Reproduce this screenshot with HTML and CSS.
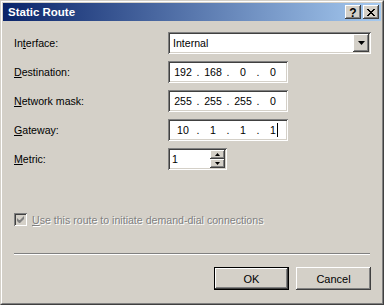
FILE: index.html
```html
<!DOCTYPE html>
<html lang="en">
<head>
  <meta charset="UTF-8" />
  <title>Static Route</title>
  <link rel="stylesheet" href="styles.css">
</head>
<body>
  <div class="window">
    <div class="frame">
      <div class="titlebar">
        <span class="title">Static Route</span>
        <div class="title-btns">
          <div class="tbtn help">?</div>
          <div class="tbtn close">
            <svg width="8" height="7" viewBox="0 0 8 7"><path d="M0 0h2v1h1v1h2v-1h1v-1h2v1h-1v1h-1v1h-1v1h1v1h1v1h1v1h-2v-1h-1v-1h-2v1h-1v1h-2v-1h1v-1h1v-1h1v-1h-1v-1h-1v-1h-1z" fill="#000"/></svg>
          </div>
        </div>
      </div>

      <div class="client">
        <div class="form">
          <label class="lbl">In<u>t</u>erface:</label>
          <div class="combo sunken">
            <span class="combo-text">Internal</span>
            <div class="drop-btn raised">
              <svg width="7" height="4" viewBox="0 0 7 4"><path d="M0 0h7l-3.5 4z" fill="#000"/></svg>
            </div>
          </div>

          <label class="lbl"><u>D</u>estination:</label>
          <div class="ip sunken">
            <span class="seg">192</span><span class="dot">.</span><span class="seg">168</span><span class="dot">.</span><span class="seg">0</span><span class="dot">.</span><span class="seg">0</span>
          </div>

          <label class="lbl"><u>N</u>etwork mask:</label>
          <div class="ip sunken">
            <span class="seg">255</span><span class="dot">.</span><span class="seg">255</span><span class="dot">.</span><span class="seg">255</span><span class="dot">.</span><span class="seg">0</span>
          </div>

          <label class="lbl"><u>G</u>ateway:</label>
          <div class="ip sunken">
            <span class="seg">10</span><span class="dot">.</span><span class="seg">1</span><span class="dot">.</span><span class="seg">1</span><span class="dot">.</span><span class="seg">1<span class="caret"></span></span>
          </div>

          <label class="lbl"><u>M</u>etric:</label>
          <div class="spin sunken">
            <span class="spin-text">1</span>
            <div class="spin-btns">
              <div class="spin-btn raised">
                <svg width="5" height="3" viewBox="0 0 5 3"><path d="M2.5 0l2.5 3h-5z" fill="#000"/></svg>
              </div>
              <div class="spin-btn raised">
                <svg width="5" height="3" viewBox="0 0 5 3"><path d="M0 0h5l-2.5 3z" fill="#000"/></svg>
              </div>
            </div>
          </div>
        </div>

        <div class="check-row">
          <div class="checkbox">
            <svg width="7" height="7" viewBox="0 0 7 7"><path d="M0 2v3l2 2h1l4-4v-3l-4 4h-1z" fill="#808080"/></svg>
          </div>
          <span class="check-text"><u>U</u>se this route to initiate demand-dial connections</span>
        </div>

        <div class="separator"></div>

        <div class="buttons">
          <button class="btn default">OK</button>
          <button class="btn">Cancel</button>
        </div>
      </div>
    </div>
  </div>
</body>
</html>
```

FILE: styles.css
```css
body {
  margin: 0;
  font-family: "Liberation Sans", Arial, sans-serif;
  font-size: 10.6px;
  color: #000;
}

.window {
  width: 384px;
  height: 305px;
  box-sizing: border-box;
  border: 1px solid;
  border-color: #d4d0c8 #404040 #404040 #d4d0c8;
  background: #d4d0c8;
}
.frame {
  height: 100%;
  box-sizing: border-box;
  border: 1px solid;
  border-color: #ffffff #808080 #808080 #ffffff;
  padding: 1px;
}

.titlebar {
  height: 18px;
  display: flex;
  align-items: center;
  justify-content: space-between;
  background: linear-gradient(to right, #0a246a, #a6caf0);
  padding: 0 2px 0 5px;
}
.title {
  color: #fff;
  font-weight: bold;
  font-size: 11.5px;
}
.title-btns {
  display: flex;
  gap: 2px;
}

.raised {
  background: #d4d0c8;
  box-sizing: border-box;
  box-shadow: inset -1px -1px #404040, inset 1px 1px #ffffff, inset -2px -2px #808080, inset 2px 2px #d4d0c8;
}
.sunken {
  background: #fff;
  box-sizing: border-box;
  box-shadow: inset 1px 1px #808080, inset -1px -1px #ffffff, inset 2px 2px #404040, inset -2px -2px #d4d0c8;
}

.tbtn {
  width: 16px;
  height: 14px;
  display: flex;
  align-items: center;
  justify-content: center;
  background: #d4d0c8;
  box-sizing: border-box;
  box-shadow: inset -1px -1px #404040, inset 1px 1px #ffffff, inset -2px -2px #808080, inset 2px 2px #d4d0c8;
}
.help {
  font-weight: bold;
  font-size: 12px;
  line-height: 14px;
  padding-top: 1px;
}
.close {
  padding-top: 1px;
}

.client {
  padding: 11px 10px 0 11px;
}

.form {
  display: grid;
  grid-template-columns: 154px auto;
  grid-auto-rows: 22px;
  row-gap: 7px;
  align-items: center;
}
.lbl {
  padding-bottom: 1px;
}

.combo {
  height: 22px;
  width: 203px;
  display: flex;
  align-items: center;
  justify-content: space-between;
  padding: 2px;
}
.combo-text {
  padding-left: 3px;
}
.drop-btn {
  width: 16px;
  height: 18px;
  display: flex;
  align-items: center;
  justify-content: center;
}

.ip {
  width: 120px;
  height: 22px;
  display: flex;
  align-items: center;
  padding: 0 2px;
}
.seg {
  width: 26px;
  text-align: center;
  position: relative;
}
.dot {
  width: 4px;
  text-align: center;
}
.caret {
  position: absolute;
  top: -1px;
  margin-left: 1px;
  width: 1px;
  height: 14px;
  background: #000;
}

.spin {
  width: 59px;
  height: 22px;
  display: flex;
  align-items: center;
  justify-content: space-between;
  padding: 2px;
}
.spin-text {
  padding-left: 2px;
}
.spin-btns {
  display: flex;
  flex-direction: column;
  height: 18px;
}
.spin-btn {
  width: 15px;
  height: 9px;
  display: flex;
  align-items: center;
  justify-content: center;
}

.check-row {
  margin-top: 43px;
  display: flex;
  align-items: center;
  gap: 5px;
  height: 13px;
}
.checkbox {
  width: 13px;
  height: 13px;
  display: flex;
  align-items: center;
  justify-content: center;
  background: #d4d0c8;
  box-sizing: border-box;
  box-shadow: inset 1px 1px #808080, inset -1px -1px #ffffff, inset 2px 2px #404040, inset -2px -2px #d4d0c8;
}
.check-text {
  color: #808080;
  text-shadow: 1px 1px #ffffff;
}

.separator {
  margin-top: 27px;
  height: 1px;
  border-top: 1px solid #808080;
  background: #ffffff;
  margin-right: 1px;
}

.buttons {
  margin-top: 12px;
  display: flex;
  justify-content: flex-end;
  gap: 7px;
}
.btn {
  width: 75px;
  height: 23px;
  font-family: "Liberation Sans", Arial, sans-serif;
  font-size: 11px;
  color: #000;
  border: none;
  padding: 0;
  background: #d4d0c8;
  box-shadow: inset -1px -1px #404040, inset 1px 1px #ffffff, inset -2px -2px #808080, inset 2px 2px #d4d0c8;
}
.btn.default {
  box-shadow: inset 0 0 0 1px #000, inset -2px -2px #404040, inset 2px 2px #ffffff, inset -3px -3px #808080;
}
```
